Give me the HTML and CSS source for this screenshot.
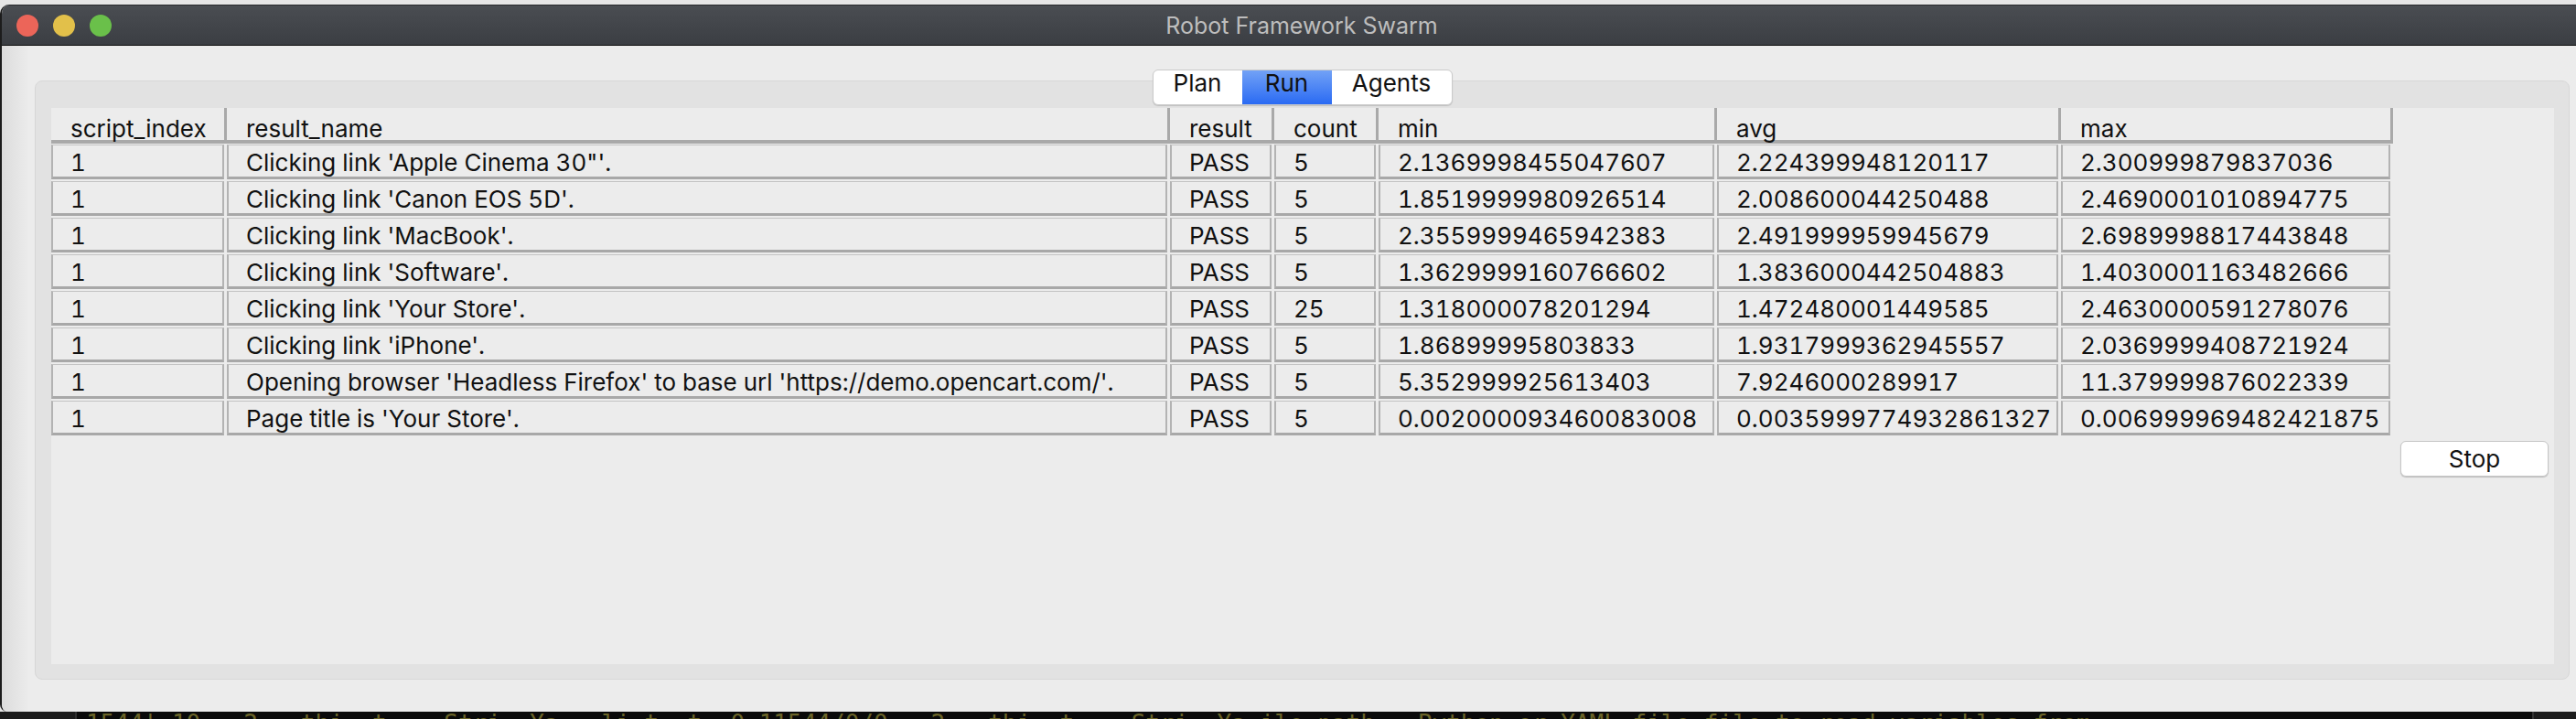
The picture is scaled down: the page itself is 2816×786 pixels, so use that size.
FILE: index.html
```html
<!DOCTYPE html>
<html lang="en">
<head>
<meta charset="utf-8">
<title>Robot Framework Swarm</title>
<link rel="stylesheet" href="styles.css">
</head>
<body>
<div class="screen">
  <div class="window">
    <div class="titlebar">
      <div class="lights">
        <span class="light red"></span>
        <span class="light yellow"></span>
        <span class="light green"></span>
      </div>
      <div class="title">Robot Framework Swarm</div>
      <div class="spacer"></div>
    </div>
    <div class="content">
      <div class="tabs">
        <span class="tab tab-plan">Plan</span>
        <span class="tab tab-run active">Run</span>
        <span class="tab tab-agents">Agents</span>
      </div>
      <div class="groupbox">
        <div class="panel">
          <div class="table">
            <div class="th">script_index</div>
            <div class="th">result_name</div>
            <div class="th">result</div>
            <div class="th">count</div>
            <div class="th">min</div>
            <div class="th">avg</div>
            <div class="th">max</div>

            <div class="td">1</div><div class="td">Clicking link 'Apple Cinema 30"'.</div><div class="td">PASS</div><div class="td">5</div><div class="td">2.1369998455047607</div><div class="td">2.224399948120117</div><div class="td">2.300999879837036</div>
            <div class="td">1</div><div class="td">Clicking link 'Canon EOS 5D'.</div><div class="td">PASS</div><div class="td">5</div><div class="td">1.8519999980926514</div><div class="td">2.008600044250488</div><div class="td">2.4690001010894775</div>
            <div class="td">1</div><div class="td">Clicking link 'MacBook'.</div><div class="td">PASS</div><div class="td">5</div><div class="td">2.3559999465942383</div><div class="td">2.491999959945679</div><div class="td">2.6989998817443848</div>
            <div class="td">1</div><div class="td">Clicking link 'Software'.</div><div class="td">PASS</div><div class="td">5</div><div class="td">1.3629999160766602</div><div class="td">1.3836000442504883</div><div class="td">1.4030001163482666</div>
            <div class="td">1</div><div class="td">Clicking link 'Your Store'.</div><div class="td">PASS</div><div class="td">25</div><div class="td">1.318000078201294</div><div class="td">1.472480001449585</div><div class="td">2.4630000591278076</div>
            <div class="td">1</div><div class="td">Clicking link 'iPhone'.</div><div class="td">PASS</div><div class="td">5</div><div class="td">1.86899995803833</div><div class="td">1.9317999362945557</div><div class="td">2.0369999408721924</div>
            <div class="td">1</div><div class="td">Opening browser 'Headless Firefox' to base url 'https://demo.opencart.com/'.</div><div class="td">PASS</div><div class="td">5</div><div class="td">5.352999925613403</div><div class="td">7.9246000289917</div><div class="td">11.379999876022339</div>
            <div class="td">1</div><div class="td">Page title is 'Your Store'.</div><div class="td">PASS</div><div class="td">5</div><div class="td">0.002000093460083008</div><div class="td">0.0035999774932861327</div><div class="td">0.006999969482421875</div>
          </div>
          <div class="actions">
            <button class="btn">Stop</button>
          </div>
        </div>
      </div>
    </div>
  </div>
  <div class="terminal">
    <div class="term-gutter"></div>
    <div class="term-text">1544| 10   2   thi  t    Stri  Ya   li t  t  0 11544/0/0   2   thi  t    Stri  Ya ile path : Python or YAML file file to read variables from.</div>
    <div class="term-end"></div>
  </div>
</div>
</body>
</html>
```

FILE: styles.css
```css
* {
  box-sizing: border-box;
}

html,
body {
  margin: 0;
  padding: 0;
}

body {
  width: 2816px;
  height: 786px;
  overflow: hidden;
  background: #e6e6e6;
  font-family: Inter, "Noto Sans", sans-serif;
  color: #111;
}

.screen {
  display: flex;
  flex-direction: column;
  height: 786px;
}

.window {
  margin-top: 5px;
  flex: 1;
  display: flex;
  flex-direction: column;
  border-left: 2px solid #1c1c1c;
  border-radius: 10px 0 0 8px;
  overflow: hidden;
  background: #ececec;
}

.titlebar {
  flex: none;
  height: 45px;
  display: grid;
  grid-template-columns: 1fr auto 1fr;
  align-items: center;
  background: linear-gradient(#4a4d52, #3b3e43);
  border-top: 1px solid #2a2b2e;
  border-bottom: 1px solid #0e0e0e;
}

.lights {
  display: flex;
  gap: 16px;
  padding-left: 16px;
}

.light {
  width: 24px;
  height: 24px;
  border-radius: 50%;
}

.red {
  background: #ec6559;
}

.yellow {
  background: #e2c04a;
}

.green {
  background: #6ac04a;
}

.title {
  color: #bdbdbd;
  font-size: 25px;
  padding-left: 28px;
}

.content {
  flex: 1;
  display: flex;
  flex-direction: column;
  padding: 26px 7px 35px 36px;
  background: linear-gradient(to right, #dcdcdc, #ececec 30px);
}

.tabs {
  align-self: center;
  display: flex;
  height: 39px;
  background: #fff;
  border: 1px solid #cacaca;
  border-radius: 6px;
  margin-bottom: -27px;
  position: relative;
  z-index: 1;
  box-shadow: 0 1px 1px rgba(0, 0, 0, 0.15);
  font-size: 26px;
}

.tab {
  display: flex;
  justify-content: center;
  align-items: flex-start;
  padding-top: 1px;
  line-height: 26px;
  color: #111;
}

.tab-plan {
  width: 97px;
  border-radius: 5px 0 0 5px;
}

.tab-run {
  width: 98px;
}

.tab-agents {
  width: 131px;
  border-radius: 0 5px 5px 0;
}

.tab.active {
  background: linear-gradient(#72a2f6, #2a6af3);
}

.groupbox {
  flex: 1;
  display: flex;
  background: #e2e2e2;
  border: 1px solid #d7d7d7;
  border-radius: 8px;
  padding: 29px 16px 16px 17px;
}

.panel {
  flex: 1;
  display: flex;
  flex-direction: column;
  align-items: flex-start;
  background: #ececec;
}

.table {
  display: grid;
  grid-template-columns: 192px 1031px 114px 114px 370px 376px 363px;
  font-size: 26px;
  font-variant-numeric: tabular-nums;
  color: #111;
}

.th {
  height: 39px;
  border-right: 3px solid #a9a9a9;
  border-bottom: 4px solid #a9a9a9;
  padding: 10px 0 0 21px;
  line-height: 26px;
  white-space: nowrap;
}

.td {
  height: 38px;
  margin: 1px 3px 1px 0;
  border-top: 1px solid #c3c3c3;
  border-left: 2px solid #b3b3b3;
  border-right: 2px solid #b3b3b3;
  border-bottom: 3px solid #a8a8a8;
  padding: 3px 0 0 19px;
  line-height: 31px;
  white-space: nowrap;
  overflow: hidden;
}

.actions {
  align-self: stretch;
  display: flex;
  justify-content: flex-end;
  padding: 5px 6px 0 0;
}

.btn {
  width: 162px;
  height: 39px;
  padding: 0;
  background: #fff;
  border: 1px solid #c6c6c6;
  border-radius: 6px;
  box-shadow: 0 1px 1px rgba(0, 0, 0, 0.2);
  font-family: Inter, "Noto Sans", sans-serif;
  font-size: 26px;
  color: #111;
}

.terminal {
  flex: none;
  height: 8px;
  display: flex;
  overflow: hidden;
  background: #0a0a0a;
}

.term-gutter {
  flex: none;
  width: 84px;
  background: #1b1b1b;
  border-right: 2px solid #2e2e2e;
}

.term-text {
  flex: 1;
  padding-left: 10px;
  font-family: "DejaVu Sans Mono", "Liberation Mono", monospace;
  font-size: 26px;
  line-height: 26px;
  color: #6a6428;
  white-space: pre;
  overflow: hidden;
}

.term-end {
  flex: none;
  width: 48px;
  background: #1c1c1c;
  border-left: 2px solid #333;
}
```
